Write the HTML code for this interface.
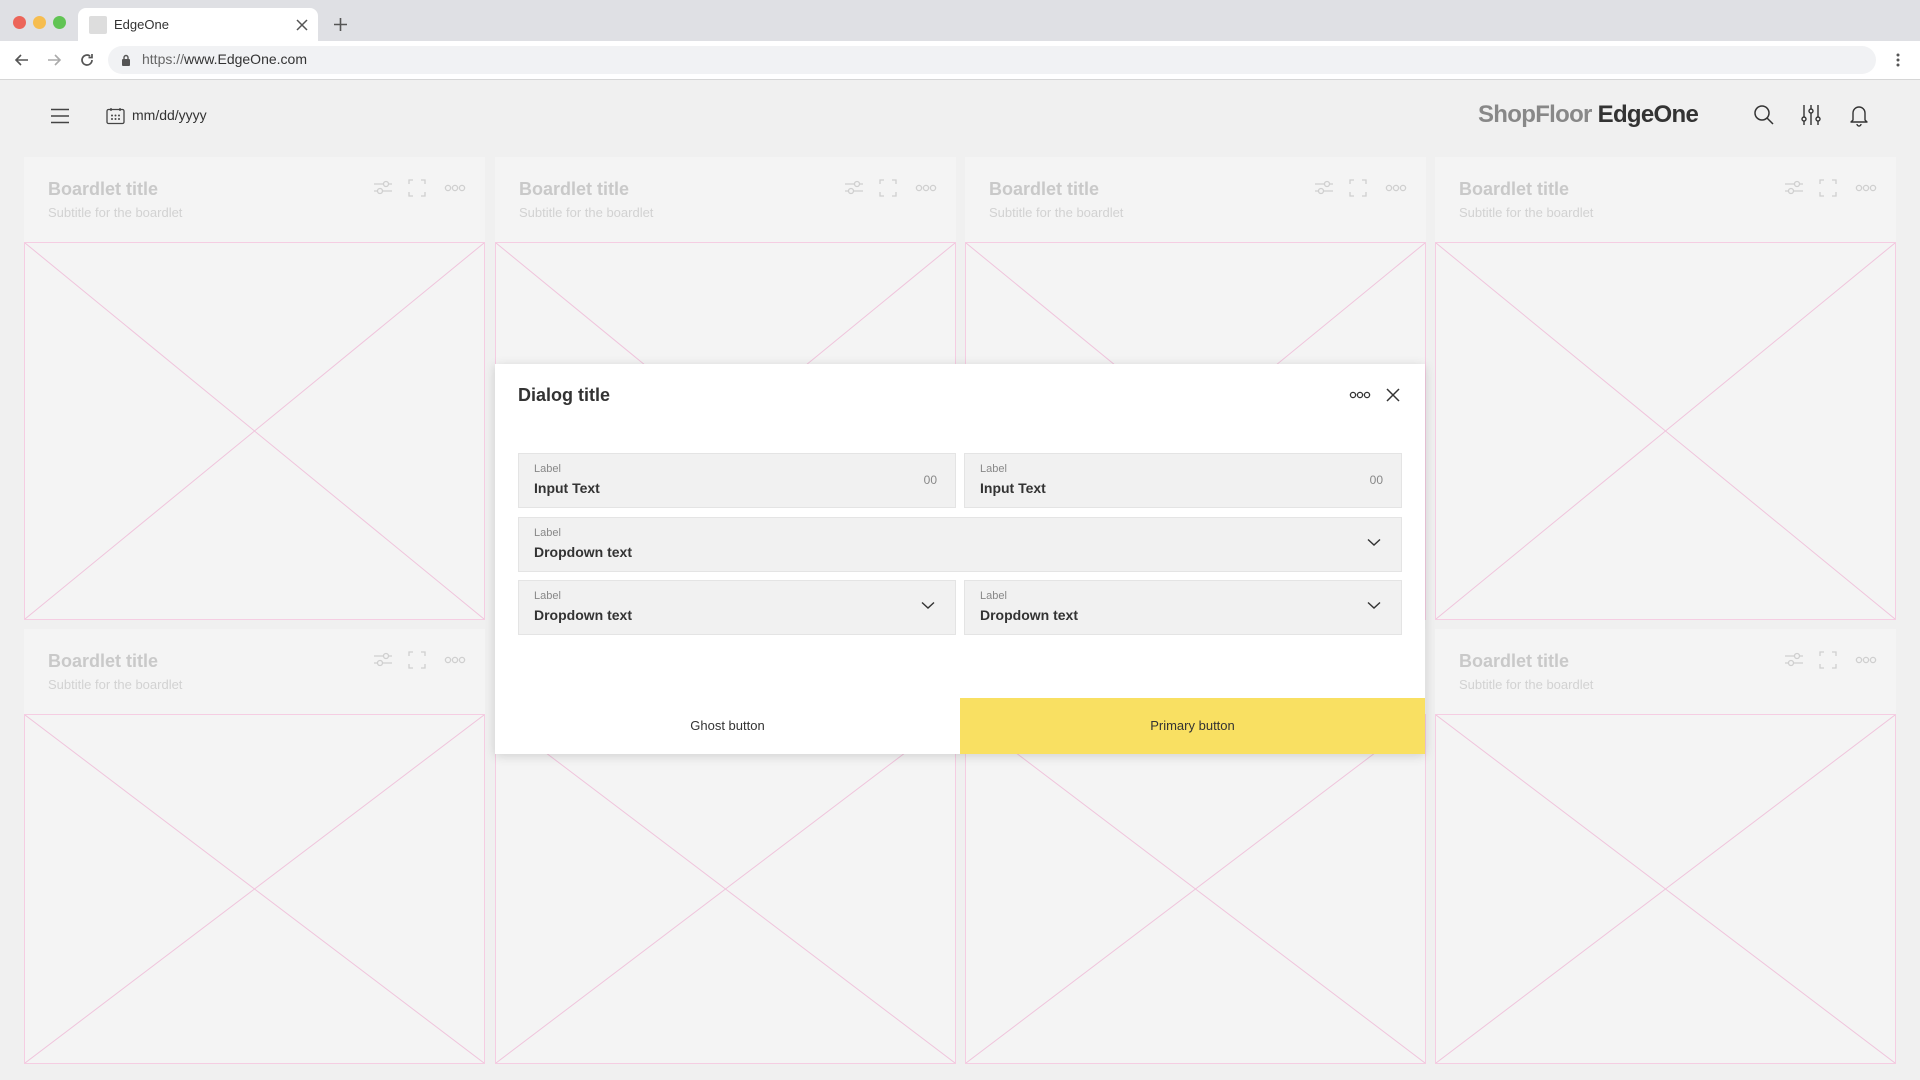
<!DOCTYPE html>
<html><head><meta charset="utf-8">
<style>
*{box-sizing:border-box;margin:0;padding:0}
body{width:1920px;height:1080px;overflow:hidden;background:#f0f0f0;font-family:"Liberation Sans",Arial,sans-serif;position:relative;color:#333}
.abs{position:absolute}
.top{left:0;top:0;width:1920px;height:41px;background:#dfe0e4}
.dot{width:13px;height:13px;border-radius:50%;top:16px}
.tab{left:78px;top:8px;width:240px;height:34px;background:#fff;border-radius:8px 8px 0 0}
.addr{left:0;top:41px;width:1920px;height:39px;background:#fff;border-bottom:1px solid #d6d6d6}
.url{left:108px;top:46px;width:1768px;height:28px;background:#f1f2f4;border-radius:14px}
.card{background:#f4f4f4;width:461px}
.ct{left:24px;top:22px;font-size:18px;font-weight:bold;color:#c9c9c9}
.cs{left:24px;top:48px;font-size:13px;color:#d2d2d2}
.img{position:absolute;left:0;right:0;border:1px solid #f5cde2}
.img svg{width:100%;height:100%;display:block}
.dlg{left:495px;top:364px;width:930px;height:390px;background:#fff;box-shadow:0 2px 10px rgba(0,0,0,.15)}
.fld{position:absolute;background:#f1f1f1;border:1px solid #e4e4e4;height:55px}
.lb{position:absolute;left:15px;top:9px;font-size:11px;color:#888}
.vl{position:absolute;left:15px;top:26px;font-size:14px;font-weight:bold;color:#333}
.chev{position:absolute;right:20px;top:20px}
</style></head><body>
<div class="abs top"></div>
<div class="abs dot" style="left:13px;background:#ec6559"></div>
<div class="abs dot" style="left:33px;background:#f6bd4f"></div>
<div class="abs dot" style="left:53px;background:#61c454"></div>
<div class="abs tab"></div>
<div class="abs" style="left:89px;top:16px;width:18px;height:18px;background:#ddd;border-radius:2px"></div>
<div class="abs" style="left:114px;top:17px;font-size:13px;color:#333">EdgeOne</div>
<svg class="abs" style="left:296px;top:19px" width="12" height="12"><path d="M1 1L11 11M11 1L1 11" stroke="#555" stroke-width="1.5"/></svg>
<svg class="abs" style="left:333px;top:17px" width="15" height="15"><path d="M7.5 1V14M1 7.5H14" stroke="#555" stroke-width="1.6"/></svg>
<div class="abs addr"></div>
<svg class="abs" style="left:14px;top:52px" width="16" height="16"><path d="M14 8H2M7 3L2 8L7 13" stroke="#555" stroke-width="1.6" fill="none"/></svg>
<svg class="abs" style="left:46px;top:52px" width="16" height="16"><path d="M2 8H14M9 3L14 8L9 13" stroke="#aaa" stroke-width="1.6" fill="none"/></svg>
<svg class="abs" style="left:79px;top:52px" width="16" height="16"><path d="M13 8A5 5 0 1 1 11 4M13 2V5.5H9.5" stroke="#555" stroke-width="1.7" fill="none"/></svg>
<div class="abs url"></div>
<svg class="abs" style="left:121px;top:54px" width="10" height="12"><rect x="1" y="5" width="8" height="7" rx="1" fill="#555"/><path d="M3 5V3.5A2 2 0 0 1 7 3.5V5" stroke="#555" stroke-width="1.4" fill="none"/></svg>
<div class="abs" style="left:142px;top:51px;font-size:14px;color:#333"><span style="color:#666">https://</span>www.EdgeOne.com</div>
<svg class="abs" style="left:1894px;top:52px" width="8" height="16"><circle cx="4" cy="3" r="1.5" fill="#555"/><circle cx="4" cy="8" r="1.5" fill="#555"/><circle cx="4" cy="13" r="1.5" fill="#555"/></svg>

<svg class="abs" style="left:50px;top:108px" width="20" height="16"><path d="M1 1.5H19M1 8H19M1 14.5H19" stroke="#444" stroke-width="1.4"/></svg>
<svg class="abs" style="left:106px;top:107px" width="20" height="18"><rect x="1" y="2.5" width="17" height="14" rx="1.5" stroke="#444" stroke-width="1.3" fill="none"/><path d="M5 1V4M14 1V4" stroke="#444" stroke-width="1.3"/><g fill="#444"><circle cx="6" cy="8.5" r="1"/><circle cx="9.5" cy="8.5" r="1"/><circle cx="13" cy="8.5" r="1"/><circle cx="6" cy="12" r="1"/><circle cx="9.5" cy="12" r="1"/><circle cx="13" cy="12" r="1"/></g></svg>
<div class="abs" style="left:132px;top:107px;font-size:14px;color:#333">mm/dd/yyyy</div>
<div class="abs" style="left:1478px;top:101px;font-size:24px;font-weight:bold;letter-spacing:-0.7px"><span style="color:#888">ShopFloor</span> <span style="color:#333">EdgeOne</span></div>
<svg class="abs" style="left:1753px;top:104px" width="22" height="22"><circle cx="9" cy="9" r="7" stroke="#333" stroke-width="1.5" fill="none"/><path d="M14 14L20 20" stroke="#333" stroke-width="1.5"/></svg>
<svg class="abs" style="left:1800px;top:104px" width="22" height="22"><g stroke="#333" stroke-width="1.4" fill="none"><path d="M4 1V13M4 17V21M11 1V5M11 9V21M18 1V13M18 17V21"/><circle cx="4" cy="15" r="2"/><circle cx="11" cy="7" r="2"/><circle cx="18" cy="15" r="2"/></g></svg>
<svg class="abs" style="left:1849px;top:103px" width="20" height="24"><path d="M4 17V10A6 6 0 0 1 16 10V17L18 19H2Z M8 21A2 2 0 0 0 12 21" stroke="#333" stroke-width="1.4" fill="none" stroke-linejoin="round"/></svg>

<!-- cards row 1 -->
<div class="abs card" style="left:24px;top:157px;height:463px"><div class="abs ct">Boardlet title</div><div class="abs cs">Subtitle for the boardlet</div>
<svg class="abs" style="left:348px;top:21px" width="108" height="20"><g stroke="#cfcfcf" stroke-width="1.3" fill="none"><path d="M2 6H20M2 13H20"/><circle cx="14" cy="6" r="2.5" fill="#f4f4f4"/><circle cx="8" cy="13" r="2.5" fill="#f4f4f4"/><path d="M37 6V2H41M49 2H53V6M53 14V18H49M41 18H37V14"/><circle cx="76" cy="10" r="2.6"/><circle cx="83" cy="10" r="2.6"/><circle cx="90" cy="10" r="2.6"/></g></svg>
<div class="img" style="top:85px;bottom:0"><svg viewBox="0 0 100 100" preserveAspectRatio="none"><path d="M0 0L100 100M100 0L0 100" stroke="#f0c4dc" stroke-width="1" vector-effect="non-scaling-stroke"/></svg></div></div>
<div class="abs card" style="left:495px;top:157px;height:463px"><div class="abs ct">Boardlet title</div><div class="abs cs">Subtitle for the boardlet</div>
<svg class="abs" style="left:348px;top:21px" width="108" height="20"><g stroke="#cfcfcf" stroke-width="1.3" fill="none"><path d="M2 6H20M2 13H20"/><circle cx="14" cy="6" r="2.5" fill="#f4f4f4"/><circle cx="8" cy="13" r="2.5" fill="#f4f4f4"/><path d="M37 6V2H41M49 2H53V6M53 14V18H49M41 18H37V14"/><circle cx="76" cy="10" r="2.6"/><circle cx="83" cy="10" r="2.6"/><circle cx="90" cy="10" r="2.6"/></g></svg>
<div class="img" style="top:85px;bottom:0"><svg viewBox="0 0 100 100" preserveAspectRatio="none"><path d="M0 0L100 100M100 0L0 100" stroke="#f0c4dc" stroke-width="1" vector-effect="non-scaling-stroke"/></svg></div></div>
<div class="abs card" style="left:965px;top:157px;height:463px"><div class="abs ct">Boardlet title</div><div class="abs cs">Subtitle for the boardlet</div>
<svg class="abs" style="left:348px;top:21px" width="108" height="20"><g stroke="#cfcfcf" stroke-width="1.3" fill="none"><path d="M2 6H20M2 13H20"/><circle cx="14" cy="6" r="2.5" fill="#f4f4f4"/><circle cx="8" cy="13" r="2.5" fill="#f4f4f4"/><path d="M37 6V2H41M49 2H53V6M53 14V18H49M41 18H37V14"/><circle cx="76" cy="10" r="2.6"/><circle cx="83" cy="10" r="2.6"/><circle cx="90" cy="10" r="2.6"/></g></svg>
<div class="img" style="top:85px;bottom:0"><svg viewBox="0 0 100 100" preserveAspectRatio="none"><path d="M0 0L100 100M100 0L0 100" stroke="#f0c4dc" stroke-width="1" vector-effect="non-scaling-stroke"/></svg></div></div>
<div class="abs card" style="left:1435px;top:157px;height:463px"><div class="abs ct">Boardlet title</div><div class="abs cs">Subtitle for the boardlet</div>
<svg class="abs" style="left:348px;top:21px" width="108" height="20"><g stroke="#cfcfcf" stroke-width="1.3" fill="none"><path d="M2 6H20M2 13H20"/><circle cx="14" cy="6" r="2.5" fill="#f4f4f4"/><circle cx="8" cy="13" r="2.5" fill="#f4f4f4"/><path d="M37 6V2H41M49 2H53V6M53 14V18H49M41 18H37V14"/><circle cx="76" cy="10" r="2.6"/><circle cx="83" cy="10" r="2.6"/><circle cx="90" cy="10" r="2.6"/></g></svg>
<div class="img" style="top:85px;bottom:0"><svg viewBox="0 0 100 100" preserveAspectRatio="none"><path d="M0 0L100 100M100 0L0 100" stroke="#f0c4dc" stroke-width="1" vector-effect="non-scaling-stroke"/></svg></div></div>
<!-- row 2 -->
<div class="abs card" style="left:24px;top:629px;height:435px"><div class="abs ct">Boardlet title</div><div class="abs cs">Subtitle for the boardlet</div>
<svg class="abs" style="left:348px;top:21px" width="108" height="20"><g stroke="#cfcfcf" stroke-width="1.3" fill="none"><path d="M2 6H20M2 13H20"/><circle cx="14" cy="6" r="2.5" fill="#f4f4f4"/><circle cx="8" cy="13" r="2.5" fill="#f4f4f4"/><path d="M37 6V2H41M49 2H53V6M53 14V18H49M41 18H37V14"/><circle cx="76" cy="10" r="2.6"/><circle cx="83" cy="10" r="2.6"/><circle cx="90" cy="10" r="2.6"/></g></svg>
<div class="img" style="top:85px;bottom:0"><svg viewBox="0 0 100 100" preserveAspectRatio="none"><path d="M0 0L100 100M100 0L0 100" stroke="#f0c4dc" stroke-width="1" vector-effect="non-scaling-stroke"/></svg></div></div>
<div class="abs card" style="left:495px;top:629px;height:435px">
<div class="img" style="top:85px;bottom:0"><svg viewBox="0 0 100 100" preserveAspectRatio="none"><path d="M0 0L100 100M100 0L0 100" stroke="#f0c4dc" stroke-width="1" vector-effect="non-scaling-stroke"/></svg></div></div>
<div class="abs card" style="left:965px;top:629px;height:435px">
<div class="img" style="top:85px;bottom:0"><svg viewBox="0 0 100 100" preserveAspectRatio="none"><path d="M0 0L100 100M100 0L0 100" stroke="#f0c4dc" stroke-width="1" vector-effect="non-scaling-stroke"/></svg></div></div>
<div class="abs card" style="left:1435px;top:629px;height:435px"><div class="abs ct">Boardlet title</div><div class="abs cs">Subtitle for the boardlet</div>
<svg class="abs" style="left:348px;top:21px" width="108" height="20"><g stroke="#cfcfcf" stroke-width="1.3" fill="none"><path d="M2 6H20M2 13H20"/><circle cx="14" cy="6" r="2.5" fill="#f4f4f4"/><circle cx="8" cy="13" r="2.5" fill="#f4f4f4"/><path d="M37 6V2H41M49 2H53V6M53 14V18H49M41 18H37V14"/><circle cx="76" cy="10" r="2.6"/><circle cx="83" cy="10" r="2.6"/><circle cx="90" cy="10" r="2.6"/></g></svg>
<div class="img" style="top:85px;bottom:0"><svg viewBox="0 0 100 100" preserveAspectRatio="none"><path d="M0 0L100 100M100 0L0 100" stroke="#f0c4dc" stroke-width="1" vector-effect="non-scaling-stroke"/></svg></div></div>

<!-- dialog -->
<div class="abs dlg">
<div class="abs" style="left:23px;top:21px;font-size:18px;font-weight:600;color:#333">Dialog title</div>
<svg class="abs" style="left:854px;top:26px" width="22" height="10"><g stroke="#333" stroke-width="1.3" fill="none"><circle cx="4" cy="5" r="2.6"/><circle cx="11" cy="5" r="2.6"/><circle cx="18" cy="5" r="2.6"/></g></svg>
<svg class="abs" style="left:891px;top:24px" width="14" height="14"><path d="M1 1L13 13M13 1L1 13" stroke="#333" stroke-width="1.5"/></svg>
<div class="fld" style="left:23px;top:89px;width:438px"><div class="lb">Label</div><div class="vl">Input Text</div><div style="position:absolute;right:18px;top:19px;font-size:12px;color:#888">00</div></div>
<div class="fld" style="left:469px;top:89px;width:438px"><div class="lb">Label</div><div class="vl">Input Text</div><div style="position:absolute;right:18px;top:19px;font-size:12px;color:#888">00</div></div>
<div class="fld" style="left:23px;top:153px;width:884px"><div class="lb">Label</div><div class="vl">Dropdown text</div><svg class="chev" width="14" height="9"><path d="M1 1.5L7 7L13 1.5" stroke="#333" stroke-width="1.4" fill="none"/></svg></div>
<div class="fld" style="left:23px;top:216px;width:438px"><div class="lb">Label</div><div class="vl">Dropdown text</div><svg class="chev" width="14" height="9"><path d="M1 1.5L7 7L13 1.5" stroke="#333" stroke-width="1.4" fill="none"/></svg></div>
<div class="fld" style="left:469px;top:216px;width:438px"><div class="lb">Label</div><div class="vl">Dropdown text</div><svg class="chev" width="14" height="9"><path d="M1 1.5L7 7L13 1.5" stroke="#333" stroke-width="1.4" fill="none"/></svg></div>
<div class="abs" style="left:0;top:334px;width:465px;height:56px;text-align:center;line-height:56px;font-size:13px;color:#333">Ghost button</div>
<div class="abs" style="left:465px;top:334px;width:465px;height:56px;background:#f9e062;text-align:center;line-height:56px;font-size:13px;color:#333">Primary button</div>
</div>
</body></html>
